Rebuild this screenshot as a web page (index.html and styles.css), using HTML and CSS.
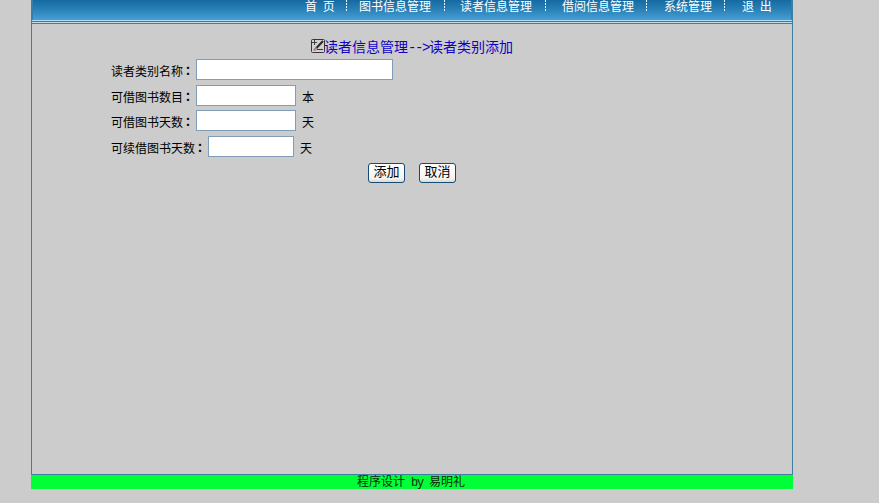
FILE: index.html
```html
<!DOCTYPE html>
<html lang="zh-CN">
<head>
<meta charset="utf-8">
<title>读者类别添加</title>
<link rel="stylesheet" href="styles.css">
</head>
<body>
<div class="page">
  <div class="frame">
    <nav class="nav">
      <a class="home">首 页</a><i class="sep"></i>
      <a class="books">图书信息管理</a><i class="sep"></i>
      <a class="readers">读者信息管理</a><i class="sep"></i>
      <a class="loans">借阅信息管理</a><i class="sep"></i>
      <a class="system">系统管理</a><i class="sep"></i>
      <a class="exit">退 出</a>
    </nav>
    <div class="rule"></div>
    <main>
      <h1 class="title">
        <svg class="icon" width="14" height="14" viewBox="0 0 14 14" fill="none">
          <rect x="0.5" y="0.5" width="13" height="13" rx="1" fill="#d2d0d0" stroke="#37343a"/>
          <path d="M1 3.5H6M3.5 1V6" stroke="#454047"/>
          <path d="M12 2L5 9.5" stroke="#29252b" stroke-width="2"/>
          <path d="M5.5 8.5L3 11.5" stroke="#a18183" stroke-width="2.2"/>
          <path d="M6 10.5H12" stroke="#37343a"/>
        </svg><span>读者信息管理<span class="arrow">--&gt;</span>读者类别添加</span>
      </h1>
      <form class="form">
        <div class="row"><label for="name">读者类别名称<b>：</b></label><input id="name" class="wide"></div>
        <div class="row"><label for="count">可借图书数目<b>：</b></label><input id="count" class="medium"><span class="unit">本</span></div>
        <div class="row"><label for="days">可借图书天数<b>：</b></label><input id="days" class="medium"><span class="unit">天</span></div>
        <div class="row"><label for="renew">可续借图书天数<b>：</b></label><input id="renew" class="small"><span class="unit">天</span></div>
        <div class="actions"><button type="button">添加</button><button type="button">取消</button></div>
      </form>
    </main>
  </div>
  <footer>程序设计<span class="latin"> by </span>易明礼</footer>
</div>
</body>
</html>
```
FILE: styles.css
```css
* { box-sizing: border-box; }

body {
  margin: 0;
  height: 503px;
  overflow: hidden;
  background: #ccc;
  color: #000;
  font: 12px/12px "Noto Sans CJK SC", sans-serif;
}

.page { width: 762px; margin-left: 31px; }

.frame {
  height: 475px;
  border: solid #3f809f;
  border-width: 0 1px 1px;
}

.nav {
  display: flex;
  height: 20px;
  padding-right: 19px;
  justify-content: flex-end;
  border: solid #347fa9;
  border-width: 0 1px;
  background: linear-gradient(#1569a0, #2a82b9 50%, #479fd7);
  color: #fff;
  line-height: 11px;
  white-space: pre;
}

.nav a { display: block; width: 73px; }
.nav .home, .nav .exit { width: 30px; word-spacing: 3px; }
.nav .home { margin-right: 11px; }
.nav .books { margin: 0 12px; }
.nav .readers { margin: 0 12px 0 15px; }
.nav .loans { margin: 0 11px 0 16px; }
.nav .system { width: 49px; margin: 0 11px 0 17px; }
.nav .exit { margin-left: 17px; }

.sep {
  width: 1px;
  height: 11px;
  background: repeating-linear-gradient(#e4f2fb 0 2px, transparent 2px 3px);
}

.rule {
  height: 4px;
  background: linear-gradient(#b5dcf0 0 1px, #397c9c 1px 2px, #c0dce6 2px 3px, #447e98 3px);
}

.title {
  display: flex;
  height: 14px;
  margin: 15px 0 0 279px;
  color: #1000c5;
  font-size: 14px;
  font-weight: normal;
  line-height: 15px;
  white-space: nowrap;
}

.title > span { margin-left: -1px; }

.icon { flex: none; }

.arrow { font-family: "Liberation Mono", monospace; letter-spacing: -1.4px; line-height: 1px; }

.form { margin: 6px 0 0 79px; }

.row { display: flex; height: 21px; margin-bottom: 5px; line-height: 24px; }
.row:nth-child(2) { margin-bottom: 4px; }

.row label { flex: none; margin-right: 1px; white-space: nowrap; }
.row label b { position: relative; left: 2px; top: -1px; }

input {
  height: 21px;
  padding: 2px;
  border: 1px solid #7f9db9;
  background: #fff;
}

.wide { width: 197px; }
.medium { width: 100px; }
.small { width: 86px; }
.unit { margin-left: 6px; }

.actions { display: flex; gap: 14px; margin: 6px 0 0 257px; }

button {
  width: 37px;
  height: 20px;
  padding: 0 0 4px;
  border: 1px solid #174b76;
  border-radius: 3px;
  background: linear-gradient(#fff, #f5f4ef 80%, #dcd8cf);
  color: #000;
  font: 13px/14px "Noto Sans CJK SC", sans-serif;
}

footer {
  height: 14px;
  padding-left: 326px;
  background: #00ff37;
  color: #102810;
  line-height: 11px;
  white-space: pre;
}

.latin { font: 12px/1px "Liberation Mono", monospace; letter-spacing: -1.2px; }
```
